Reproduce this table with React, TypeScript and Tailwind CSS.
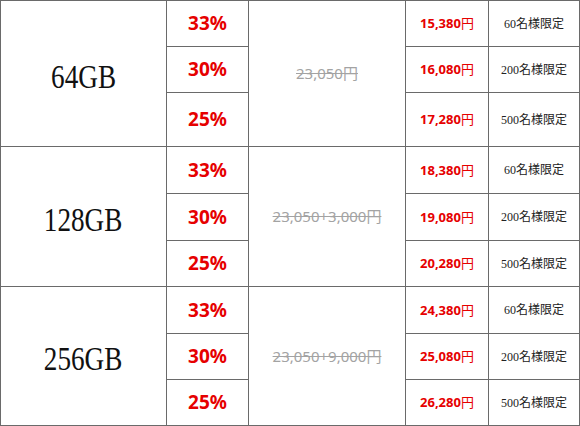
import { Fragment } from "react";

const groups = [
  {
    size: "64GB",
    base: "23,050円",
    rows: [
      { pct: "33%", price: "15,380", limit: "60" },
      { pct: "30%", price: "16,080", limit: "200" },
      { pct: "25%", price: "17,280", limit: "500" },
    ],
  },
  {
    size: "128GB",
    base: "23,050+3,000円",
    rows: [
      { pct: "33%", price: "18,380", limit: "60" },
      { pct: "30%", price: "19,080", limit: "200" },
      { pct: "25%", price: "20,280", limit: "500" },
    ],
  },
  {
    size: "256GB",
    base: "23,050+9,000円",
    rows: [
      { pct: "33%", price: "24,380", limit: "60" },
      { pct: "30%", price: "25,080", limit: "200" },
      { pct: "25%", price: "26,280", limit: "500" },
    ],
  },
];

const cell = "bg-white flex items-center justify-center";

export default function App() {
  return (
    <div className="w-[580px] h-[426px] bg-white">
      <div className="grid grid-cols-[165px_81px_156px_82px_90px] grid-rows-[45px_45px_53px_46px_46px_45px_46px_45px_45px] gap-px bg-[#6a6a6a] border border-[#6a6a6a] font-['Noto_Sans','Noto_Sans_CJK_JP',sans-serif]">
        {groups.map((g) =>
          g.rows.map((r, i) => (
            <Fragment key={g.size + i}>
              {i === 0 && (
                <div className={`${cell} row-span-3`}>
                  <span className="font-['Liberation_Serif',serif] text-[34px] leading-none text-[#111] scale-x-[0.8] pt-1.5">
                    {g.size}
                  </span>
                </div>
              )}
              <div className={cell}>
                <span className="text-[19px] font-bold text-[#e60000] leading-none">
                  {r.pct}
                </span>
              </div>
              {i === 0 && (
                <div className={`${cell} row-span-3`}>
                  <span className="text-[15px] text-[#a3a3a3] line-through leading-none">
                    {g.base}
                  </span>
                </div>
              )}
              <div className={cell}>
                <span className="text-[13px] font-bold text-[#e60000] leading-none">
                  {r.price}
                  <span className="font-normal">円</span>
                </span>
              </div>
              <div className={cell}>
                <span className="text-[12px] text-[#222] leading-none">
                  <span className="font-['Liberation_Serif',serif]">{r.limit}</span>
                  名様限定
                </span>
              </div>
            </Fragment>
          ))
        )}
      </div>
    </div>
  );
}
